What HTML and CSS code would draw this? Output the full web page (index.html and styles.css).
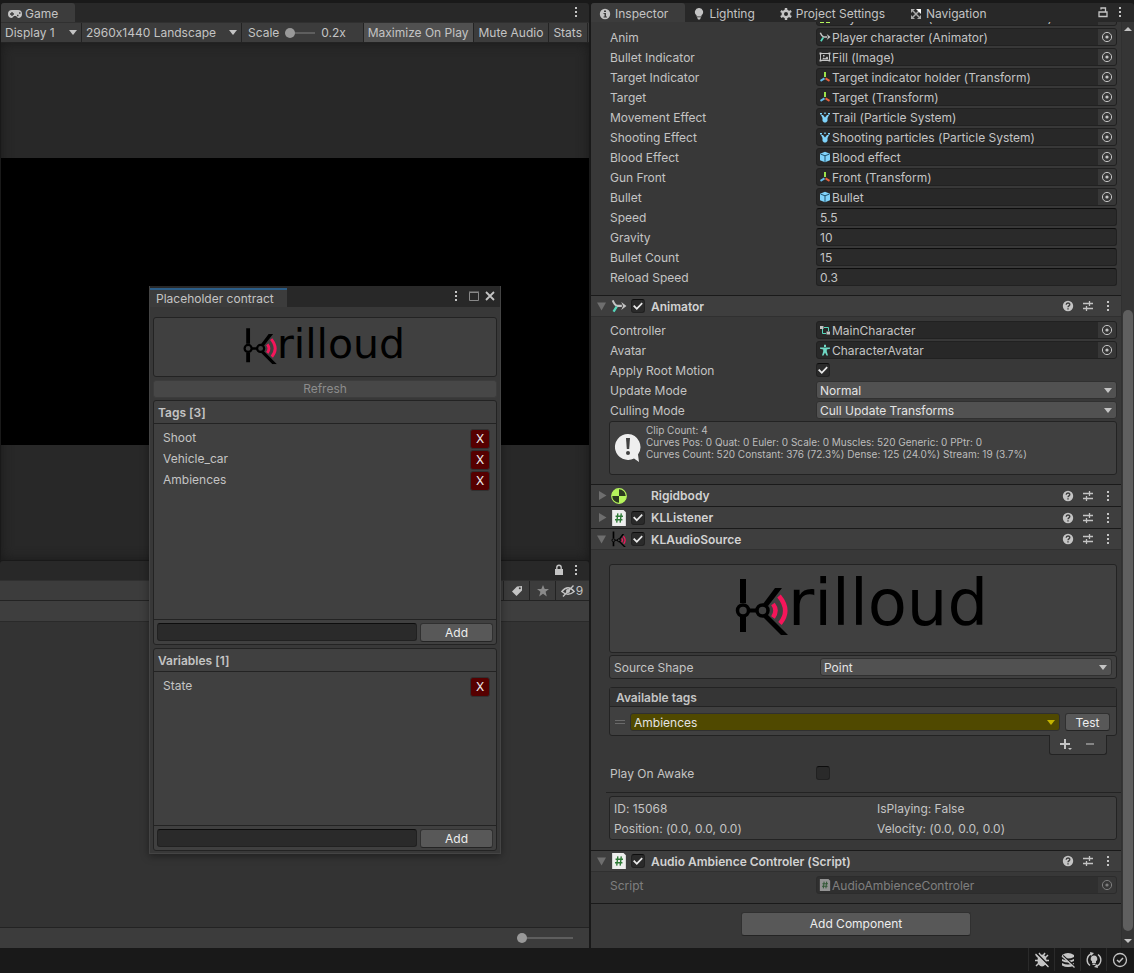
FILE: index.html
```html
<!DOCTYPE html>
<html lang="en">

<head>
	<meta charset="utf-8">
	<title>Krilloud - Editor</title>
	<link rel="stylesheet" href="styles.css">
</head>

<body>
	<!-- shared icons -->
	<svg class="sprite" width="0" height="0">
		<symbol id="dots" viewBox="0 0 4 12">
			<path d="M1 1h2v2H1zM1 5h2v2H1zM1 9h2v2H1z" fill="#c4c4c4" />
		</symbol>
		<symbol id="pick" viewBox="0 0 12 12">
			<circle cx="6" cy="6" r="4.6" fill="none" stroke="#c4c4c4" />
			<circle cx="6" cy="6" r="1.6" fill="#c4c4c4" />
		</symbol>
		<symbol id="help" viewBox="0 0 12 12">
			<circle cx="6" cy="6" r="5.2" fill="#c4c4c4" />
			<path d="M4.2 4.8c0-2.4 3.6-2.4 3.6-.2C7.800 6 6 5.800 6 7.300M6 8.200v1.400" fill="none" stroke="#3e3e3e" stroke-width="1.400" />
		</symbol>
		<symbol id="preset" viewBox="0 0 12 12">
			<path d="M1 3.500h6M8 3.500h3M7.500 1v5M1 8.500h3M5 8.500h6M4.500 6v5" stroke="#c4c4c4" stroke-width="1.300" fill="none" />
		</symbol>
		<symbol id="transform" viewBox="0 0 12 12">
			<path d="M5 1h2v5H5z" fill="#9be04a" />
			<path d="M5 6.500L1 9l1 1.800 4-2.600z" fill="#61b8e8" />
			<path d="M7 6.500L11 9l-1 1.800-4-2.600z" fill="#e8603c" />
		</symbol>
		<symbol id="particles" viewBox="0 0 12 12">
			<path d="M1 2h2v1.500H1zM9 2h2v1.500H9zM5.300 1.500h1.400V3H5.300z" fill="#7fd3fa" />
			<path d="M2 4h2l2 2.500L8 4h2L8.500 7v3L7 11.500H5L3.500 10V7z" fill="#7fd3fa" />
		</symbol>
		<symbol id="cube" viewBox="0 0 12 12">
			<path d="M6 .8l5 1.900v6.600l-5 2-5-2V2.700z" fill="#7fd3fa" />
			<path d="M1.500 3L6 4.800 10.500 3M6 4.800V11" stroke="#20506a" fill="none" />
		</symbol>
		<symbol id="animator" viewBox="0 0 14 14">
			<path d="M1.500 2c1 2.500 2 4.300 4 4.900h4" stroke="#c4c4c4" stroke-width="1.800" fill="none" />
			<path d="M9 3.500L13.500 7 9 10.500 10.500 7z" fill="#c4c4c4" />
			<path d="M5 7.500L2.200 12" stroke="#56d9bd" stroke-width="2" />
		</symbol>
		<symbol id="image" viewBox="0 0 12 12">
			<path d="M1.500 2.500h9v7h-9z" fill="none" stroke="#c4c4c4" />
			<path d="M.5 1.500h2v2h-2zM9.500 1.500h2v2h-2zM.5 8.500h2v2h-2zM9.500 8.500h2v2h-2zM3 8.500l1.500-2L6 7.500 8 5.500l1 1v2zM4 4h1.500v1.500H4z" fill="#c4c4c4" />
		</symbol>
		<symbol id="controller" viewBox="0 0 12 12">
			<path d="M5 3.500h4.500V7M3.500 5v4.500H7" fill="none" stroke="#56d9bd" />
			<path d="M1 2h3.500v3H1zM7.500 7.500H11v3H7.500z" fill="#c4c4c4" />
		</symbol>
		<symbol id="avatar" viewBox="0 0 12 12">
			<path d="M5 .8h2V3H5zM1 3.500h10v1.200L7.800 5.500v2L9 11.500H7.500L6 8.500l-1.500 3H3l1.200-4v-2L1 4.700z" fill="#6fd8c4" />
		</symbol>
		<symbol id="script" viewBox="0 0 14 14">
			<path d="M1 0h10l2 2v12H1z" fill="#eee" />
			<path d="M6 3L5 11M9 3l-1 8M4 5.500h6.500M3.500 8.500H10" stroke="#2e7a36" stroke-width="1.200" />
		</symbol>
		<symbol id="rigidbody" viewBox="0 0 14 14">
			<circle cx="7" cy="7" r="6.400" fill="#2c3a20" stroke="#b5f45c" />
			<path d="M7 7V.6A6.400 6.400 0 0 0 .6 7zM7 7v6.400A6.400 6.400 0 0 0 13.400 7z" fill="#b5f45c" />
		</symbol>
		<symbol id="charcontroller" viewBox="0 0 12 12">
			<path d="M1 8h4v4H1zM7 8h4v4H7z" fill="#b5f45c" />
		</symbol>
		<symbol id="lock" viewBox="0 0 10 12">
			<path d="M1 5h8v6H1z" fill="#c4c4c4" />
			<path d="M2.800 5.500V3.500a2.200 2.200 0 0 1 4.400 0v2" fill="none" stroke="#c4c4c4" stroke-width="1.400" />
		</symbol>
		<symbol id="mark" viewBox="0 0 56 58">
			<path d="M5 2h6v24H5zM5 40h6v15H5z" />
			<path d="M13 31.500h10v4H13z" />
			<path d="M28 27L40 11h7L33 29zM27 39l5-2 21 21h-7z" />
			<circle cx="8" cy="33.500" r="5.500" fill="none" stroke="#000" stroke-width="3.500" />
			<circle cx="27.500" cy="33.500" r="5.500" fill="none" stroke="#000" stroke-width="3.500" />
			<path d="M38 27q5 6.500 0 13.500M44 19q12 14.500 1 27.500" fill="none" stroke="#f5155a" stroke-width="4.500" />
		</symbol>
	</svg>

	<div class="editor">
		<div class="left">
			<section class="game">
				<div class="tabs">
					<div class="tab active">
						<svg width="14" height="10" viewBox="0 0 14 10">
							<path d="M4 1h6a4 4 0 0 1 0 8L8 7H6L4 9a4 4 0 0 1 0-8z" fill="#c4c4c4" />
							<path d="M2 5h4M4 3v4M9 6.500h1.500M11 4h1.500" stroke="#3c3c3c" stroke-width="1.300" />
						</svg>
						Game
					</div>
					<button class="icon-btn menu" aria-label="Game menu"><svg width="4" height="12"><use href="#dots" /></svg></button>
				</div>
				<div class="toolbar">
					<div class="drop drop-display">
						<select aria-label="Display"><option>Display 1</option></select>
					</div>
					<div class="drop drop-aspect">
						<select aria-label="Aspect"><option>2960x1440 Landscape</option></select>
					</div>
					<div class="scale">
						<label for="scale">Scale</label>
						<input id="scale" class="slider" type="range" min="0" max="100" value="0">
						<span>0.2x</span>
					</div>
					<button class="tool on">Maximize On Play</button>
					<button class="tool">Mute Audio</button>
					<button class="tool">Stats</button>
				</div>
				<div class="viewport">
					<div class="screen"></div>
				</div>
			</section>

			<section class="project">
				<div class="tabs">
					<button class="icon-btn lock" aria-label="Lock"><svg width="10" height="12"><use href="#lock" /></svg></button>
					<button class="icon-btn menu" aria-label="Project menu"><svg width="4" height="12"><use href="#dots" /></svg></button>
				</div>
				<div class="toolbar filters">
					<button class="filter" aria-label="Labels">
						<svg width="12" height="12" viewBox="0 0 12 12">
							<path d="M6 1.500L11 1v4.500L5.500 11 1 6.500z" fill="#c4c4c4" />
							<circle cx="8.800" cy="3.200" r="1" fill="#3c3c3c" />
						</svg>
					</button>
					<button class="filter" aria-label="Favorites">
						<svg width="12" height="12" viewBox="0 0 12 12">
							<path d="M6 0l1.700 4H12L8.600 6.800 9.800 11.500 6 8.800l-3.800 2.700 1.200-4.700L0 4h4.300z" fill="#8a8a8a" />
						</svg>
					</button>
					<button class="filter hidden-count">
						<svg width="14" height="12" viewBox="0 0 14 12">
							<path d="M.8 6.500Q7-1 13.200 6.500 7 12 .8 6.500z" fill="none" stroke="#c4c4c4" stroke-width="1.300" />
							<circle cx="7" cy="6" r="2" fill="#c4c4c4" />
							<path d="M2 11.500L12.500 .5" stroke="#c4c4c4" stroke-width="1.300" />
						</svg>
						9
					</button>
				</div>
				<div class="path"></div>
				<div class="assets"></div>
				<div class="zoom">
					<input class="slider" type="range" min="0" max="100" value="0" aria-label="Icon size">
				</div>
			</section>
		</div>

		<section class="inspector">
			<div class="tabs">
				<div class="tab active">
					<svg width="12" height="12" viewBox="0 0 12 12">
						<circle cx="6" cy="6" r="5.200" fill="#c4c4c4" />
						<path d="M5 2.500h2v1.500H5zM4.500 5H7v3.500h1v1H4.500v-1h1V6h-1z" fill="#3c3c3c" />
					</svg>
					Inspector
				</div>
				<div class="tab">
					<svg width="12" height="12" viewBox="0 0 12 12">
						<path d="M6 0a4 4 0 0 1 2.500 7.200V8.500h-5V7.200A4 4 0 0 1 6 0zM4 9.300h4L7 11.500H5z" fill="#c4c4c4" />
					</svg>
					Lighting
				</div>
				<div class="tab">
					<svg width="12" height="12" viewBox="0 0 12 12">
						<circle cx="6" cy="6" r="3.200" fill="none" stroke="#c4c4c4" stroke-width="2.400" />
						<path d="M6 0v2.500M6 9.500V12M.8 3L3 4.300M9 7.700L11.200 9M.8 9L3 7.700M9 4.300L11.200 3" stroke="#c4c4c4" stroke-width="2.400" />
					</svg>
					Project Settings
				</div>
				<div class="tab">
					<svg width="12" height="12" viewBox="0 0 12 12">
						<path d="M3 3l6 6M3 9l6-6" stroke="#aaa" stroke-width="1.500" />
						<path d="M1 1h4L1 5zM1 7l4 4H1zM11 7v4H7z" fill="#aaa" />
						<path d="M6 1h5v5z" fill="#fff" />
					</svg>
					Navigation
				</div>
				<button class="icon-btn lock" aria-label="Lock">
					<svg width="10" height="12" viewBox="0 0 10 12">
						<path d="M1 6h8v4.500H1zM3 3.500V2h4.500v4" fill="none" stroke="#c4c4c4" stroke-width="1.300" />
					</svg>
				</button>
				<button class="icon-btn menu" aria-label="Inspector menu"><svg width="4" height="12"><use href="#dots" /></svg></button>
			</div>

			<div class="scroll">
				<div class="components">
					<div class="component player">
						<div class="row">
							<span class="label">Controller</span>
							<div class="object"><svg width="12" height="12"><use href="#charcontroller" /></svg><span>Player character (Character Controller)</span><button aria-label="Select Controller"><svg width="12" height="12"><use href="#pick" /></svg></button></div>
						</div>
						<div class="row">
							<span class="label">Anim</span>
							<div class="object"><svg width="12" height="12"><use href="#animator" /></svg><span>Player character (Animator)</span><button aria-label="Select Anim"><svg width="12" height="12"><use href="#pick" /></svg></button></div>
						</div>
						<div class="row">
							<span class="label">Bullet Indicator</span>
							<div class="object"><svg width="12" height="12"><use href="#image" /></svg><span>Fill (Image)</span><button aria-label="Select Bullet Indicator"><svg width="12" height="12"><use href="#pick" /></svg></button></div>
						</div>
						<div class="row">
							<span class="label">Target Indicator</span>
							<div class="object"><svg width="12" height="12"><use href="#transform" /></svg><span>Target indicator holder (Transform)</span><button aria-label="Select Target Indicator"><svg width="12" height="12"><use href="#pick" /></svg></button></div>
						</div>
						<div class="row">
							<span class="label">Target</span>
							<div class="object"><svg width="12" height="12"><use href="#transform" /></svg><span>Target (Transform)</span><button aria-label="Select Target"><svg width="12" height="12"><use href="#pick" /></svg></button></div>
						</div>
						<div class="row">
							<span class="label">Movement Effect</span>
							<div class="object"><svg width="12" height="12"><use href="#particles" /></svg><span>Trail (Particle System)</span><button aria-label="Select Movement Effect"><svg width="12" height="12"><use href="#pick" /></svg></button></div>
						</div>
						<div class="row">
							<span class="label">Shooting Effect</span>
							<div class="object"><svg width="12" height="12"><use href="#particles" /></svg><span>Shooting particles (Particle System)</span><button aria-label="Select Shooting Effect"><svg width="12" height="12"><use href="#pick" /></svg></button></div>
						</div>
						<div class="row">
							<span class="label">Blood Effect</span>
							<div class="object"><svg width="12" height="12"><use href="#cube" /></svg><span>Blood effect</span><button aria-label="Select Blood Effect"><svg width="12" height="12"><use href="#pick" /></svg></button></div>
						</div>
						<div class="row">
							<span class="label">Gun Front</span>
							<div class="object"><svg width="12" height="12"><use href="#transform" /></svg><span>Front (Transform)</span><button aria-label="Select Gun Front"><svg width="12" height="12"><use href="#pick" /></svg></button></div>
						</div>
						<div class="row">
							<span class="label">Bullet</span>
							<div class="object"><svg width="12" height="12"><use href="#cube" /></svg><span>Bullet</span><button aria-label="Select Bullet"><svg width="12" height="12"><use href="#pick" /></svg></button></div>
						</div>
						<div class="row">
							<label class="label" for="speed">Speed</label>
							<input id="speed" class="field" type="text" value="5.5">
						</div>
						<div class="row">
							<label class="label" for="gravity">Gravity</label>
							<input id="gravity" class="field" type="text" value="10">
						</div>
						<div class="row">
							<label class="label" for="bullets">Bullet Count</label>
							<input id="bullets" class="field" type="text" value="15">
						</div>
						<div class="row">
							<label class="label" for="reload">Reload Speed</label>
							<input id="reload" class="field" type="text" value="0.3">
						</div>
					</div>

					<div class="component">
						<div class="head open">
							<span class="fold"></span>
							<svg class="type" width="16" height="16"><use href="#animator" /></svg>
							<input class="check" type="checkbox" checked aria-label="Enable Animator">
							<h2>Animator</h2>
							<button class="icon-btn" aria-label="Help"><svg width="12" height="12"><use href="#help" /></svg></button>
							<button class="icon-btn" aria-label="Presets"><svg width="12" height="12"><use href="#preset" /></svg></button>
							<button class="icon-btn" aria-label="Menu"><svg width="4" height="12"><use href="#dots" /></svg></button>
						</div>
						<div class="body animator">
							<div class="row">
								<span class="label">Controller</span>
								<div class="object"><svg width="12" height="12"><use href="#controller" /></svg><span>MainCharacter</span><button aria-label="Select Controller"><svg width="12" height="12"><use href="#pick" /></svg></button></div>
							</div>
							<div class="row">
								<span class="label">Avatar</span>
								<div class="object"><svg width="12" height="12"><use href="#avatar" /></svg><span>CharacterAvatar</span><button aria-label="Select Avatar"><svg width="12" height="12"><use href="#pick" /></svg></button></div>
							</div>
							<div class="row">
								<label class="label" for="root">Apply Root Motion</label>
								<input id="root" class="check" type="checkbox" checked>
							</div>
							<div class="row">
								<label class="label" for="update">Update Mode</label>
								<div class="select"><select id="update"><option>Normal</option></select></div>
							</div>
							<div class="row">
								<label class="label" for="culling">Culling Mode</label>
								<div class="select"><select id="culling"><option>Cull Update Transforms</option></select></div>
							</div>
							<div class="box info">
								<svg width="28" height="30" viewBox="0 0 28 30">
									<path d="M14 1a13 13 0 1 0 6 24.500L25 29l-1-7.500A13 13 0 0 0 14 1z" fill="#eee" />
									<path d="M12 5h4l-.8 11h-2.400z" fill="#404040" />
									<circle cx="14" cy="20" r="2" fill="#404040" />
								</svg>
								<p>Clip Count: 4<br>Curves Pos: 0 Quat: 0 Euler: 0 Scale: 0 Muscles: 520 Generic: 0 PPtr: 0<br>Curves Count: 520 Constant: 376 (72.3%) Dense: 125 (24.0%) Stream: 19 (3.7%)</p>
							</div>
						</div>
					</div>

					<div class="component">
						<div class="head">
							<span class="fold"></span>
							<svg class="type" width="16" height="16"><use href="#rigidbody" /></svg>
							<span class="no-check"></span>
							<h2>Rigidbody</h2>
							<button class="icon-btn" aria-label="Help"><svg width="12" height="12"><use href="#help" /></svg></button>
							<button class="icon-btn" aria-label="Presets"><svg width="12" height="12"><use href="#preset" /></svg></button>
							<button class="icon-btn" aria-label="Menu"><svg width="4" height="12"><use href="#dots" /></svg></button>
						</div>
					</div>

					<div class="component">
						<div class="head">
							<span class="fold"></span>
							<svg class="type" width="16" height="16"><use href="#script" /></svg>
							<input class="check" type="checkbox" checked aria-label="Enable KLListener">
							<h2>KLListener</h2>
							<button class="icon-btn" aria-label="Help"><svg width="12" height="12"><use href="#help" /></svg></button>
							<button class="icon-btn" aria-label="Presets"><svg width="12" height="12"><use href="#preset" /></svg></button>
							<button class="icon-btn" aria-label="Menu"><svg width="4" height="12"><use href="#dots" /></svg></button>
						</div>
					</div>

					<div class="component">
						<div class="head open">
							<span class="fold"></span>
							<svg class="type" width="16" height="16"><use href="#mark" /></svg>
							<input class="check" type="checkbox" checked aria-label="Enable KLAudioSource">
							<h2>KLAudioSource</h2>
							<button class="icon-btn" aria-label="Help"><svg width="12" height="12"><use href="#help" /></svg></button>
							<button class="icon-btn" aria-label="Presets"><svg width="12" height="12"><use href="#preset" /></svg></button>
							<button class="icon-btn" aria-label="Menu"><svg width="4" height="12"><use href="#dots" /></svg></button>
						</div>
						<div class="body audio">
							<div class="box logo">
								<svg width="256" height="64" viewBox="0 0 256 64">
									<use href="#mark" width="56" height="58" />
									<text class="wordmark" x="53" y="48">rilloud</text>
								</svg>
							</div>
							<div class="box shape">
								<label class="label" for="shape">Source Shape</label>
								<div class="select"><select id="shape"><option>Point</option></select></div>
							</div>
							<div class="box tags">
								<h3>Available tags</h3>
								<div class="tag">
									<span class="grip"></span>
									<div class="select yellow"><select aria-label="Tag"><option>Ambiences</option></select></div>
									<button class="btn test">Test</button>
								</div>
							</div>
							<div class="tags-foot">
								<button class="icon-btn" aria-label="Add tag">
									<svg width="14" height="14" viewBox="0 0 14 14">
										<path d="M1 6h10M6 1v10" stroke="#c4c4c4" stroke-width="2" />
										<path d="M9 10h4l-2 2z" fill="#c4c4c4" />
									</svg>
								</button>
								<button class="icon-btn" aria-label="Remove tag">
									<svg width="14" height="14" viewBox="0 0 14 14"><path d="M3 6h8" stroke="#858585" stroke-width="2" /></svg>
								</button>
							</div>
							<div class="row">
								<label class="label" for="awake">Play On Awake</label>
								<input id="awake" class="check" type="checkbox">
							</div>
							<div class="line"></div>
							<div class="box stats">
								<span>ID: 15068</span>
								<span>IsPlaying: False</span>
								<span>Position: (0.0, 0.0, 0.0)</span>
								<span>Velocity: (0.0, 0.0, 0.0)</span>
							</div>
						</div>
					</div>

					<div class="component">
						<div class="head open">
							<span class="fold"></span>
							<svg class="type" width="16" height="16"><use href="#script" /></svg>
							<input class="check" type="checkbox" checked aria-label="Enable Audio Ambience Controler">
							<h2>Audio Ambience Controler (Script)</h2>
							<button class="icon-btn" aria-label="Help"><svg width="12" height="12"><use href="#help" /></svg></button>
							<button class="icon-btn" aria-label="Presets"><svg width="12" height="12"><use href="#preset" /></svg></button>
							<button class="icon-btn" aria-label="Menu"><svg width="4" height="12"><use href="#dots" /></svg></button>
						</div>
						<div class="body">
							<div class="row disabled">
								<span class="label">Script</span>
								<div class="object"><svg width="12" height="12"><use href="#script" /></svg><span>AudioAmbienceControler</span><button disabled aria-label="Select Script"><svg width="12" height="12"><use href="#pick" /></svg></button></div>
							</div>
						</div>
					</div>

					<div class="add-component">
						<button class="btn">Add Component</button>
					</div>
				</div>
				<div class="scrollbar">
					<span class="arrow up"></span>
					<div class="track"><div class="thumb"></div></div>
					<span class="arrow down"></span>
				</div>
			</div>
		</section>
	</div>

	<footer class="status">
		<button class="icon-btn" aria-label="Debugger">
			<svg width="16" height="16" viewBox="0 0 16 16">
				<ellipse cx="8" cy="8.500" rx="4.500" ry="6" fill="#c4c4c4" />
				<path d="M2 3l3 3M14 3l-3 3M1 8.500h14M2 14l3-3M14 14l-3-3M5 1l2 3M11 1L9 4" stroke="#c4c4c4" stroke-width="1.500" />
				<path d="M2.500 1l13 13" stroke="#191919" stroke-width="1.500" />
				<path d="M1.500 2l13 13" stroke="#c4c4c4" stroke-width="1.300" />
			</svg>
		</button>
		<button class="icon-btn" aria-label="Cache server">
			<svg width="16" height="16" viewBox="0 0 16 16">
				<path d="M2 3q6-4 12 0v2q-6 3-12 0zM2 7q6 3 12 0v2q-6 3-12 0zM2 11q6 3 12 0v2.500q-6 3-12 0z" fill="#c4c4c4" />
				<path d="M3 3.500l12 11" stroke="#191919" stroke-width="1.500" />
				<path d="M2 4l12.500 11.500" stroke="#c4c4c4" stroke-width="1.300" />
			</svg>
		</button>
		<button class="icon-btn" aria-label="Auto lighting">
			<svg width="16" height="16" viewBox="0 0 16 16">
				<path d="M6 1.500a6.800 6.800 0 0 0-2 12M10 14.500a6.800 6.800 0 0 0 2-12" fill="none" stroke="#c4c4c4" stroke-width="1.400" />
				<path d="M8 3.500a3.200 3.200 0 0 1 2 5.800V11H6V9.300a3.200 3.200 0 0 1 2-5.800zM6.500 11.500h3V13h-3zM4 0l4 1-3 3zM12 16l-4-1 3-3z" fill="#c4c4c4" />
			</svg>
		</button>
		<button class="icon-btn" aria-label="Progress">
			<svg width="16" height="16" viewBox="0 0 16 16">
				<circle cx="8" cy="8" r="6.500" fill="none" stroke="#c4c4c4" stroke-width="1.300" />
				<path d="M5 8l2.200 2L11 6" fill="none" stroke="#c4c4c4" stroke-width="1.500" />
			</svg>
		</button>
	</footer>

	<!-- floating window -->
	<div class="window">
		<div class="window-bar">
			<div class="window-tab">Placeholder contract</div>
			<button class="icon-btn window-menu" aria-label="Window menu"><svg width="4" height="12"><use href="#dots" /></svg></button>
			<button class="icon-btn" aria-label="Maximize">
				<svg width="10" height="10" viewBox="0 0 10 10"><path d="M.5 1.500h9v8h-9zM0 1h10" fill="none" stroke="#888" stroke-width="1" /></svg>
			</button>
			<button class="icon-btn" aria-label="Close">
				<svg width="10" height="10" viewBox="0 0 10 10"><path d="M1 1l8 8M9 1L1 9" stroke="#c4c4c4" stroke-width="1.800" /></svg>
			</button>
		</div>
		<div class="window-body">
			<div class="box logo">
				<svg width="164" height="41" viewBox="0 0 256 64">
					<use href="#mark" width="56" height="58" />
					<text class="wordmark" x="53" y="48">rilloud</text>
				</svg>
			</div>
			<button class="btn refresh" disabled>Refresh</button>
			<div class="box list list-tags">
				<h3>Tags [3]</h3>
				<ul>
					<li>Shoot <button class="remove" aria-label="Remove Shoot">X</button></li>
					<li>Vehicle_car <button class="remove" aria-label="Remove Vehicle_car">X</button></li>
					<li>Ambiences <button class="remove" aria-label="Remove Ambiences">X</button></li>
				</ul>
				<form class="add">
					<input class="field" type="text" aria-label="New tag">
					<button class="btn" type="button">Add</button>
				</form>
			</div>
			<div class="box list list-vars">
				<h3>Variables [1]</h3>
				<ul>
					<li>State <button class="remove" aria-label="Remove State">X</button></li>
				</ul>
				<form class="add">
					<input class="field" type="text" aria-label="New variable">
					<button class="btn" type="button">Add</button>
				</form>
			</div>
		</div>
	</div>
</body>

</html>
```

FILE: styles.css
```css
* {
	box-sizing: border-box;
}

body {
	margin: 0;
	height: 100vh;
	display: flex;
	flex-direction: column;
	overflow: hidden;
	background-color: #191919;
	color: #c4c4c4;
	font-family: Inter, "Liberation Sans", sans-serif;
	font-size: 12px;
	line-height: 18px;
	font-variant-ligatures: none;
}

button,
input,
select {
	margin: 0;
	padding: 0;
	border: none;
	background: none;
	color: inherit;
	font: inherit;
	font-variant-ligatures: none;
}

h2,
h3,
p,
ul {
	margin: 0;
	padding: 0;
	font-size: 12px;
}

svg {
	display: block;
	flex: none;
}

.sprite {
	position: absolute;
}

.editor {
	flex: 1;
	min-height: 0;
	padding: 3px 0 0 1px;
	display: grid;
	grid-template-columns: minmax(0, 1fr) 543px;
	grid-template-rows: minmax(0, 1fr);
	column-gap: 2px;
}

.left {
	display: flex;
	flex-direction: column;
	min-height: 0;
}

.icon-btn {
	display: flex;
	align-items: center;
	justify-content: center;
}

/* tabs */

.tabs {
	display: flex;
	height: 19px;
	background-color: #282828;
	border-radius: 3px 3px 0 0;
}

.tab {
	display: flex;
	align-items: center;
	gap: 4px;
	padding: 2px 17px 0 8px;
	white-space: nowrap;
}

.tab.active {
	background-color: #3c3c3c;
	border-radius: 3px 3px 0 0;
}

.tabs .icon-btn {
	width: 16px;
	padding-bottom: 2px;
}

.tabs .lock {
	margin-right: 1px;
}

.tabs .menu {
	margin-right: 5px;
}

.tabs .icon-btn:first-of-type {
	margin-left: auto;
}

/* game view */

.game {
	flex: 1;
	display: flex;
	flex-direction: column;
}

.game .tab {
	padding-left: 7px;
	gap: 3px;
}

.toolbar {
	display: flex;
	height: 21px;
	padding-right: 1px;
	background-color: #3c3c3c;
	border-top: 1px solid #303030;
	border-bottom: 1px solid #232323;
}

.drop {
	position: relative;
	border-right: 1px solid #232323;
}

.drop-display {
	width: 81px;
}

.drop-aspect {
	width: 160px;
}

.drop select {
	width: 100%;
	height: 100%;
	padding-left: 4px;
	appearance: none;
}

.drop::after,
.select::after {
	content: "";
	position: absolute;
	right: 4px;
	top: 7px;
	border: 4px solid transparent;
	border-top: 5px solid #c4c4c4;
	border-bottom: none;
	pointer-events: none;
}

.scale {
	display: flex;
	align-items: center;
	flex: 1;
	gap: 6px;
	padding-left: 6px;
}

.slider {
	width: 30px;
	height: 10px;
	appearance: none;
	background: linear-gradient(#5e5e5e, #5e5e5e) center / 100% 2px no-repeat;
}

.slider::-webkit-slider-thumb {
	appearance: none;
	width: 10px;
	height: 10px;
	border-radius: 50%;
	background-color: #999;
}

.tool {
	padding: 0 5px 0 4px;
	border-left: 1px solid #232323;
	white-space: nowrap;
}

.tool:last-child {
	border-right: 1px solid #232323;
}

.tool.on {
	background-color: #505050;
}

.viewport {
	flex: 1;
	display: flex;
	align-items: center;
	background-color: #282828;
	box-shadow: inset 0 0 12px #1a1a1a;
}

.screen {
	flex: 1;
	aspect-ratio: 37 / 18;
	background-color: #000;
}

/* project panel */

.project {
	flex: none;
	display: flex;
	flex-direction: column;
	height: 388px;
	margin-left: -1px;
	padding-top: 1px;
}

.project .toolbar {
	justify-content: flex-end;
}

.filter {
	display: flex;
	align-items: center;
	justify-content: center;
	gap: 1px;
	width: 26px;
	border-left: 1px solid #232323;
}

.hidden-count {
	width: 33px;
}

.path {
	height: 21px;
	background-color: #3e3e3e;
	border-bottom: 1px solid #2a2a2a;
}

.assets {
	flex: 1;
	background-color: #333;
}

.zoom {
	display: flex;
	justify-content: flex-end;
	align-items: center;
	height: 21px;
	padding-right: 16px;
	background-color: #3c3c3c;
	border-top: 1px solid #232323;
}

.zoom .slider {
	width: 56px;
}

/* inspector */

.inspector {
	display: flex;
	flex-direction: column;
	min-height: 0;
}

.inspector .menu {
	margin-right: 6px;
}

.scroll {
	flex: 1;
	min-height: 0;
	display: flex;
	overflow: hidden;
	background-color: #383838;
}

.components {
	flex: 1;
	min-width: 0;
}

.scrollbar {
	display: flex;
	flex-direction: column;
	align-items: center;
	width: 13px;
	padding: 5px 0;
	background-color: #353535;
	border-left: 1px solid #303030;
}

.arrow {
	border: 4px solid transparent;
}

.arrow.up {
	border-bottom-color: #c4c4c4;
	border-top: none;
}

.arrow.down {
	border-top-color: #c4c4c4;
	border-bottom: none;
}

.track {
	flex: 1;
	display: flex;
	flex-direction: column;
	justify-content: flex-end;
	padding-bottom: 8px;
}

.thumb {
	width: 10px;
	height: 69%;
	border-radius: 5px;
	background-color: #5f5f5f;
}

/* scrolled part of the first component */
.player {
	margin-top: -15px;
	padding: 0 4px 8px 19px;
}

.row {
	display: flex;
	align-items: center;
	height: 20px;
}

.label {
	flex: none;
	width: 206px;
	padding-top: 1px;
}

.object,
.field {
	flex: 1;
	min-width: 0;
	height: 18px;
	background-color: #2a2a2a;
	border: 1px solid #212121;
	border-radius: 3px;
}

.field {
	padding: 2px 3px 0;
	border-top-color: #0d0d0d;
}

.object {
	display: flex;
	align-items: center;
	padding-left: 2px;
	background-color: #282828;
	white-space: nowrap;
}

.object span {
	flex: 1;
	padding: 2px 0 0 1px;
}

.object button {
	display: flex;
	align-items: center;
	justify-content: center;
	width: 18px;
	height: 16px;
	background-color: #373737;
	border-radius: 0 2px 2px 0;
}

.disabled .label,
.disabled .object {
	opacity: 0.5;
}

.head {
	display: flex;
	align-items: center;
	height: 22px;
	padding: 0 11px 0 6px;
	background-color: #3e3e3e;
	border-top: 1px solid #1a1a1a;
}

.head.open {
	border-bottom: 1px solid #303030;
}

.fold {
	width: 10px;
	height: 10px;
	background-color: #6e6e6e;
	clip-path: polygon(20% 5%, 95% 50%, 20% 95%);
}

.open .fold {
	clip-path: polygon(0 15%, 90% 15%, 45% 95%);
}

.type {
	margin: 0 4px;
}

.check {
	position: relative;
	flex: none;
	appearance: none;
	width: 14px;
	height: 14px;
	background-color: #2a2a2a;
	border: 1px solid #212121;
	border-top-color: #0d0d0d;
	border-radius: 3px;
}

.check:checked::before {
	content: "";
	position: absolute;
	inset: 1px;
	background-color: #e8e8e8;
	clip-path: polygon(0 52%, 13% 40%, 38% 64%, 86% 14%, 98% 27%, 38% 90%);
}

.no-check {
	width: 14px;
}

.head h2 {
	flex: 1;
	padding: 1px 0 0 6px;
	color: #d2d2d2;
	font-weight: 600;
}

.head .icon-btn {
	width: 12px;
	margin-left: 8px;
}

.head .icon-btn:last-child {
	width: 4px;
	margin-left: 12px;
}

.body {
	padding: 3px 4px 8px 19px;
}

.box {
	background-color: #404040;
	border: 1px solid #232323;
	border-radius: 3px;
}

.select {
	position: relative;
	flex: 1;
	min-width: 0;
	height: 18px;
	background-color: #515151;
	border: 1px solid #303030;
	border-radius: 3px;
}

.select::after {
	top: 6px;
}

.select select {
	display: block;
	width: 100%;
	height: 16px;
	padding: 0 0 2px 3px;
	color: #e4e4e4;
	appearance: none;
}

.btn {
	background-color: #585858;
	border: 1px solid #303030;
	border-bottom-color: #242424;
	border-radius: 3px;
	color: #eee;
}

.animator {
	padding-bottom: 9px;
}

.info {
	display: flex;
	gap: 4px;
	height: 54px;
	margin: 1px 0 0 -1px;
	padding: 2px 4px;
}

.info svg {
	margin-top: 9px;
}

.info p {
	font-size: 10px;
	line-height: 12px;
	color: #bdbdbd;
}

.audio {
	padding: 14px 4px 10px 18px;
}

.logo {
	display: flex;
	align-items: center;
	justify-content: center;
	height: 89px;
}

.logo svg {
	overflow: visible;
}

.wordmark {
	font-family: "DejaVu Sans", sans-serif;
	font-size: 64px;
}

.shape {
	display: flex;
	align-items: center;
	height: 24px;
	margin-top: 2px;
	padding: 0 4px;
}

.tags {
	height: 49px;
	margin-top: 8px;
}

.tags h3,
.list h3 {
	font-weight: 600;
	border-bottom: 1px solid #232323;
}

.tags h3 {
	height: 19px;
	padding-left: 6px;
	background-color: #353535;
	line-height: 20px;
}

.tag {
	display: flex;
	align-items: center;
	height: 29px;
	padding: 0 6px 0 5px;
}

.grip {
	width: 10px;
	height: 4px;
	margin-right: 5px;
	border-top: 1px solid #6a6a6a;
	border-bottom: 1px solid #6a6a6a;
}

.yellow {
	background-color: #504900;
}

.yellow::after {
	border-top-color: #c4b400;
}

.test {
	width: 45px;
	height: 18px;
	margin-left: 5px;
	line-height: 18px;
}

.tags-foot {
	position: relative;
	display: flex;
	align-items: center;
	justify-content: space-around;
	width: 58px;
	height: 20px;
	margin: -1px 10px 0 auto;
	padding: 0 4px;
	background-color: #404040;
	border: 1px solid #232323;
	border-top: none;
	border-radius: 0 0 3px 3px;
}

.audio .row {
	margin: 8px 0 0 1px;
}

.line {
	height: 1px;
	margin: 9px -4px 3px -3px;
	background-color: #232323;
}

.stats {
	display: grid;
	grid-template-columns: 263px 1fr;
	align-content: center;
	row-gap: 2px;
	height: 44px;
	padding: 1px 4px 0;
}

.add-component {
	padding-top: 8px;
	border-top: 1px solid #1a1a1a;
	text-align: center;
}

.add-component .btn {
	width: 230px;
	height: 24px;
}

/* status bar */

.status {
	display: flex;
	justify-content: flex-end;
	height: 25px;
	padding: 0 2px 2px 0;
}

.status .icon-btn {
	width: 26px;
	border-left: 1px solid #2a2a2a;
}

/* floating window */

.window {
	position: absolute;
	left: 149px;
	top: 286px;
	width: 352px;
	background-color: #383838;
	border: 1px solid #444;
	border-top: none;
	box-shadow: 0 2px 8px rgba(0, 0, 0, 0.4);
}

.window-bar {
	display: flex;
	align-items: center;
	gap: 6px;
	height: 21px;
	padding-right: 5px;
	background-color: #282828;
}

.window-bar .icon-btn {
	padding-bottom: 1px;
}

.window-menu {
	margin-right: 5px;
}

.window-tab {
	height: 19px;
	margin: 2px auto 0 0;
	padding: 0 13px 0 6px;
	background-color: #3c3c3c;
	border-top: 2px solid #2c5d87;
}

.window-body {
	padding: 10px 3px 2px;
}

.window .logo {
	height: 60px;
}

.refresh {
	display: block;
	width: 100%;
	height: 18px;
	margin: 3px 0 2px;
	background-color: #474747;
	border-color: #3c3c3c;
	color: #8c8c8c;
	line-height: 16px;
}

.list {
	display: flex;
	flex-direction: column;
}

.list-tags {
	height: 245px;
}

.list-vars {
	height: 203px;
	margin-top: 3px;
}

.list h3 {
	height: 23px;
	padding: 3px 4px 0;
}

.list ul {
	flex: 1;
	padding: 5px 6px 0 9px;
	list-style: none;
}

.list li {
	display: flex;
	justify-content: space-between;
	height: 21px;
}

.remove {
	width: 20px;
	height: 20px;
	background-color: #560000;
	border: 1px solid #303030;
	border-radius: 3px;
	color: #eee;
}

.add {
	display: flex;
	gap: 3px;
	padding: 3px 3px 2px;
	border-top: 1px solid #232323;
}

.add .btn {
	width: 73px;
	height: 19px;
	line-height: 17px;
}
```
